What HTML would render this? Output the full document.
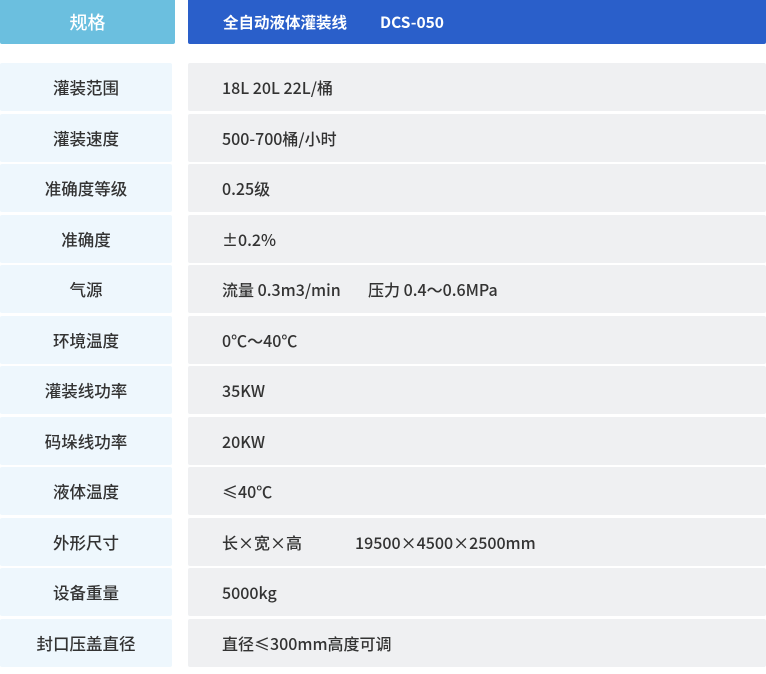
<!DOCTYPE html><html><head><meta charset="utf-8"><style>
body{margin:0;width:766px;height:674px;background:#fff;font-family:"Noto Sans CJK SC","Liberation Sans",sans-serif;position:relative;overflow:hidden}
.h{position:absolute;top:0;height:44px;color:#fff;font-size:15px;line-height:44px;border-radius:0 0 2px 2px}
.l,.r{position:absolute;height:48px;line-height:48px;font-size:16.5px;color:#333;border-radius:2px;font-weight:500}
.l{left:0;width:172px;background:#eef7fd;text-align:center}
.r{left:188px;width:578px;background:#eff0f2;padding-left:34px;box-sizing:border-box;font-size:16px}
</style></head><body>
<div class="h" style="left:0;width:175px;background:#6bbfdf;text-align:center;font-size:18px;font-weight:500">规格</div>
<div class="h" style="left:188px;width:578px;background:#2a5fca;padding-left:35px;box-sizing:border-box;font-size:15.5px;font-weight:bold">全自动液体灌装线<span style="position:absolute;left:192px">DCS-050</span></div>
<div class="l" style="top:63px">灌装范围</div><div class="r" style="top:63px">18L 20L 22L/桶</div>
<div class="l" style="top:113.5px">灌装速度</div><div class="r" style="top:113.5px">500-700桶/小时</div>
<div class="l" style="top:164px">准确度等级</div><div class="r" style="top:164px">0.25级</div>
<div class="l" style="top:214.5px">准确度</div><div class="r" style="top:214.5px">±0.2%</div>
<div class="l" style="top:265px">气源</div><div class="r" style="top:265px">流量 0.3m3/min<span style="position:absolute;left:180px">压力 0.4～0.6MPa</span></div>
<div class="l" style="top:315.5px">环境温度</div><div class="r" style="top:315.5px">0℃～40℃</div>
<div class="l" style="top:366px">灌装线功率</div><div class="r" style="top:366px">35KW</div>
<div class="l" style="top:416.5px">码垛线功率</div><div class="r" style="top:416.5px">20KW</div>
<div class="l" style="top:467px">液体温度</div><div class="r" style="top:467px">≤40℃</div>
<div class="l" style="top:517.5px">外形尺寸</div><div class="r" style="top:517.5px">长×宽×高<span style="position:absolute;left:167px">19500×4500×2500mm</span></div>
<div class="l" style="top:568px">设备重量</div><div class="r" style="top:568px">5000kg</div>
<div class="l" style="top:618.5px">封口压盖直径</div><div class="r" style="top:618.5px">直径≤300mm高度可调</div>
</body></html>
